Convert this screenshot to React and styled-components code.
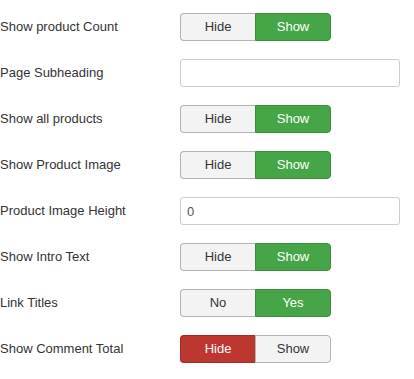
import styled, { createGlobalStyle, css } from 'styled-components';

const GlobalStyle = createGlobalStyle`
  body {
    margin: 0;
    background: #fff;
    font-family: "Liberation Sans", Arial, sans-serif;
    font-size: 13px;
    color: #333;
  }
`;

const Form = styled.div`
  display: flex;
  flex-direction: column;
  gap: 18px;
  padding-top: 13px;
`;

const Row = styled.div`
  display: flex;
  align-items: center;
  height: 28px;
`;

const Label = styled.label`
  width: 180px;
  flex-shrink: 0;
  font-size: 13px;
  line-height: 18px;
`;

const Group = styled.div`
  display: flex;
`;

const Toggle = styled.button`
  box-sizing: border-box;
  width: 76px;
  height: 28px;
  padding: 4px 12px;
  font-family: inherit;
  font-size: 13px;
  line-height: 18px;
  color: #333;
  background: #f3f3f3;
  border: 1px solid #b3b3b3;
  cursor: pointer;

  &:first-child {
    width: 75px;
    border-radius: 4px 0 0 4px;
    border-right: none;
  }
  &:last-child {
    border-radius: 0 4px 4px 0;
  }

  ${(p) =>
    p.$active === 'green' &&
    css`
      background: #46a546;
      border-color: #3b8c3b;
      color: #fff;
    `}
  ${(p) =>
    p.$active === 'red' &&
    css`
      background: #bd362f;
      border-color: #a02d27;
      color: #fff;
    `}
`;

const TextInput = styled.input`
  box-sizing: border-box;
  width: 220px;
  height: 28px;
  padding: 4px 6px;
  font-family: inherit;
  font-size: 13px;
  color: #555;
  border: 1px solid #ccc;
  border-radius: 3px;
  outline: none;
`;

function YesNo({ off, on, value }) {
  return (
    <Group>
      <Toggle $active={value ? '' : 'red'}>{off}</Toggle>
      <Toggle $active={value ? 'green' : ''}>{on}</Toggle>
    </Group>
  );
}

const fields = [
  { label: 'Show product Count', type: 'toggle', value: true },
  { label: 'Page Subheading', type: 'text', value: '' },
  { label: 'Show all products', type: 'toggle', value: true },
  { label: 'Show Product Image', type: 'toggle', value: true },
  { label: 'Product Image Height', type: 'text', value: '0' },
  { label: 'Show Intro Text', type: 'toggle', value: true },
  { label: 'Link Titles', type: 'toggle', value: true, off: 'No', on: 'Yes' },
  { label: 'Show Comment Total', type: 'toggle', value: false },
];

export default function App() {
  return (
    <>
      <GlobalStyle />
      <Form>
        {fields.map((f) => (
          <Row key={f.label}>
            <Label>{f.label}</Label>
            {f.type === 'toggle' ? (
              <YesNo off={f.off || 'Hide'} on={f.on || 'Show'} value={f.value} />
            ) : (
              <TextInput defaultValue={f.value} />
            )}
          </Row>
        ))}
      </Form>
    </>
  );
}
